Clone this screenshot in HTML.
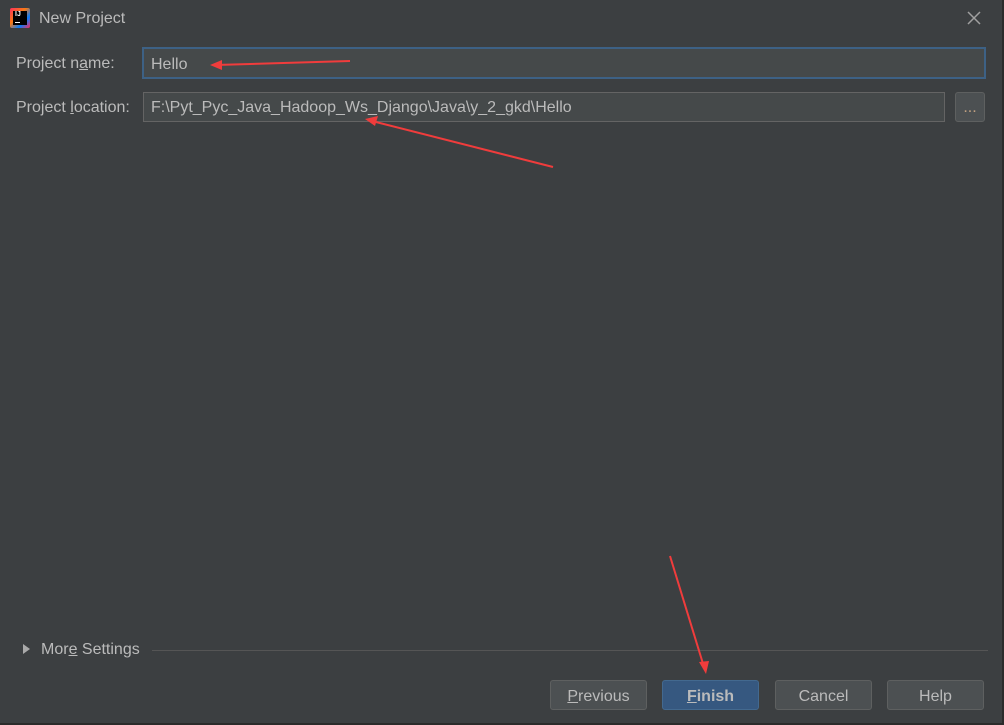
<!DOCTYPE html>
<html><head><meta charset="utf-8"><style>
*{margin:0;padding:0;box-sizing:border-box}
body{width:1004px;height:725px;background:#3c3f41;font-family:"Liberation Sans",sans-serif;color:#bbbbbb;font-size:16px;position:relative;overflow:hidden}
.a{position:absolute}
.frame{left:0;top:0;width:1004px;height:725px;border-right:2px solid #2b2b2b;border-bottom:2px solid #2b2b2b}
.inp{background:#45494a;border:1px solid #646464;height:30px;padding-left:7px;line-height:30px;color:#bbbbbb}
.btn{height:30px;border:1px solid #5e6060;border-radius:3px;background:#4c5052;text-align:center;line-height:31px;color:#bbbbbb}
u{text-decoration:underline}
</style></head><body>
<div class="a frame"></div>
<div class="a" style="left:10px;top:8px;width:20px;height:20px;background:linear-gradient(135deg,#fe315d,#f97a12 40%,#087cfa 70%,#fe2857);border-radius:2px"></div>
<div class="a" style="left:13px;top:11px;width:14px;height:14px;background:#000;color:#fff;font-size:7px;font-weight:bold;line-height:8px;padding-left:2px">IJ</div>
<div class="a" style="left:15px;top:22px;width:5px;height:1px;background:#fff"></div>
<div class="a" style="left:39px;top:10px;font-size:16px">New Project</div>
<svg class="a" style="left:966px;top:10px" width="16" height="16"><path d="M2 2L14 14M14 2L2 14" stroke="#a0a0a0" stroke-width="1.5"/></svg>
<div class="a" style="left:16px;top:55px">Project n<u>a</u>me:</div>
<div class="a inp" style="left:142px;top:47px;width:844px;height:32px;border:2px solid #3d6185;line-height:31px">Hello</div>
<div class="a" style="left:16px;top:99px">Project <u>l</u>ocation:</div>
<div class="a inp" style="left:143px;top:92px;width:802px">F:\Pyt_Pyc_Java_Hadoop_Ws_Django\Java\y_2_gkd\Hello</div>
<div class="a btn" style="left:955px;top:92px;width:30px;color:#c0a080;line-height:30px">...</div>
<svg class="a" style="left:22px;top:643px" width="10" height="12"><path d="M1 1L8 6L1 11Z" fill="#aaaaaa"/></svg>
<div class="a" style="left:41px;top:641px">Mor<u>e</u> Settings</div>
<div class="a" style="left:152px;top:650px;width:836px;height:1px;background:#555555"></div>
<div class="a btn" style="left:550px;top:680px;width:97px"><u>P</u>revious</div>
<div class="a btn" style="left:662px;top:680px;width:97px;background:#365880;border-color:#43698f;font-weight:bold"><u>F</u>inish</div>
<div class="a btn" style="left:775px;top:680px;width:97px">Cancel</div>
<div class="a btn" style="left:887px;top:680px;width:97px">Help</div>
<svg class="a" style="left:0;top:0" width="1004" height="725">
<g stroke="#f03c3c" stroke-width="2.5" fill="#f03c3c">
<path d="M350 61L215 65" stroke-width="2"/><path d="M210 65L222 60L222 70Z" stroke="none"/>
<path d="M553 167L372 121" stroke-width="2"/><path d="M365 119L378 116L375 126Z" stroke="none"/>
<path d="M670 556L704 667" stroke-width="2"/><path d="M706 674L699 662L709 661Z" stroke="none"/>
</g></svg>
</body></html>
